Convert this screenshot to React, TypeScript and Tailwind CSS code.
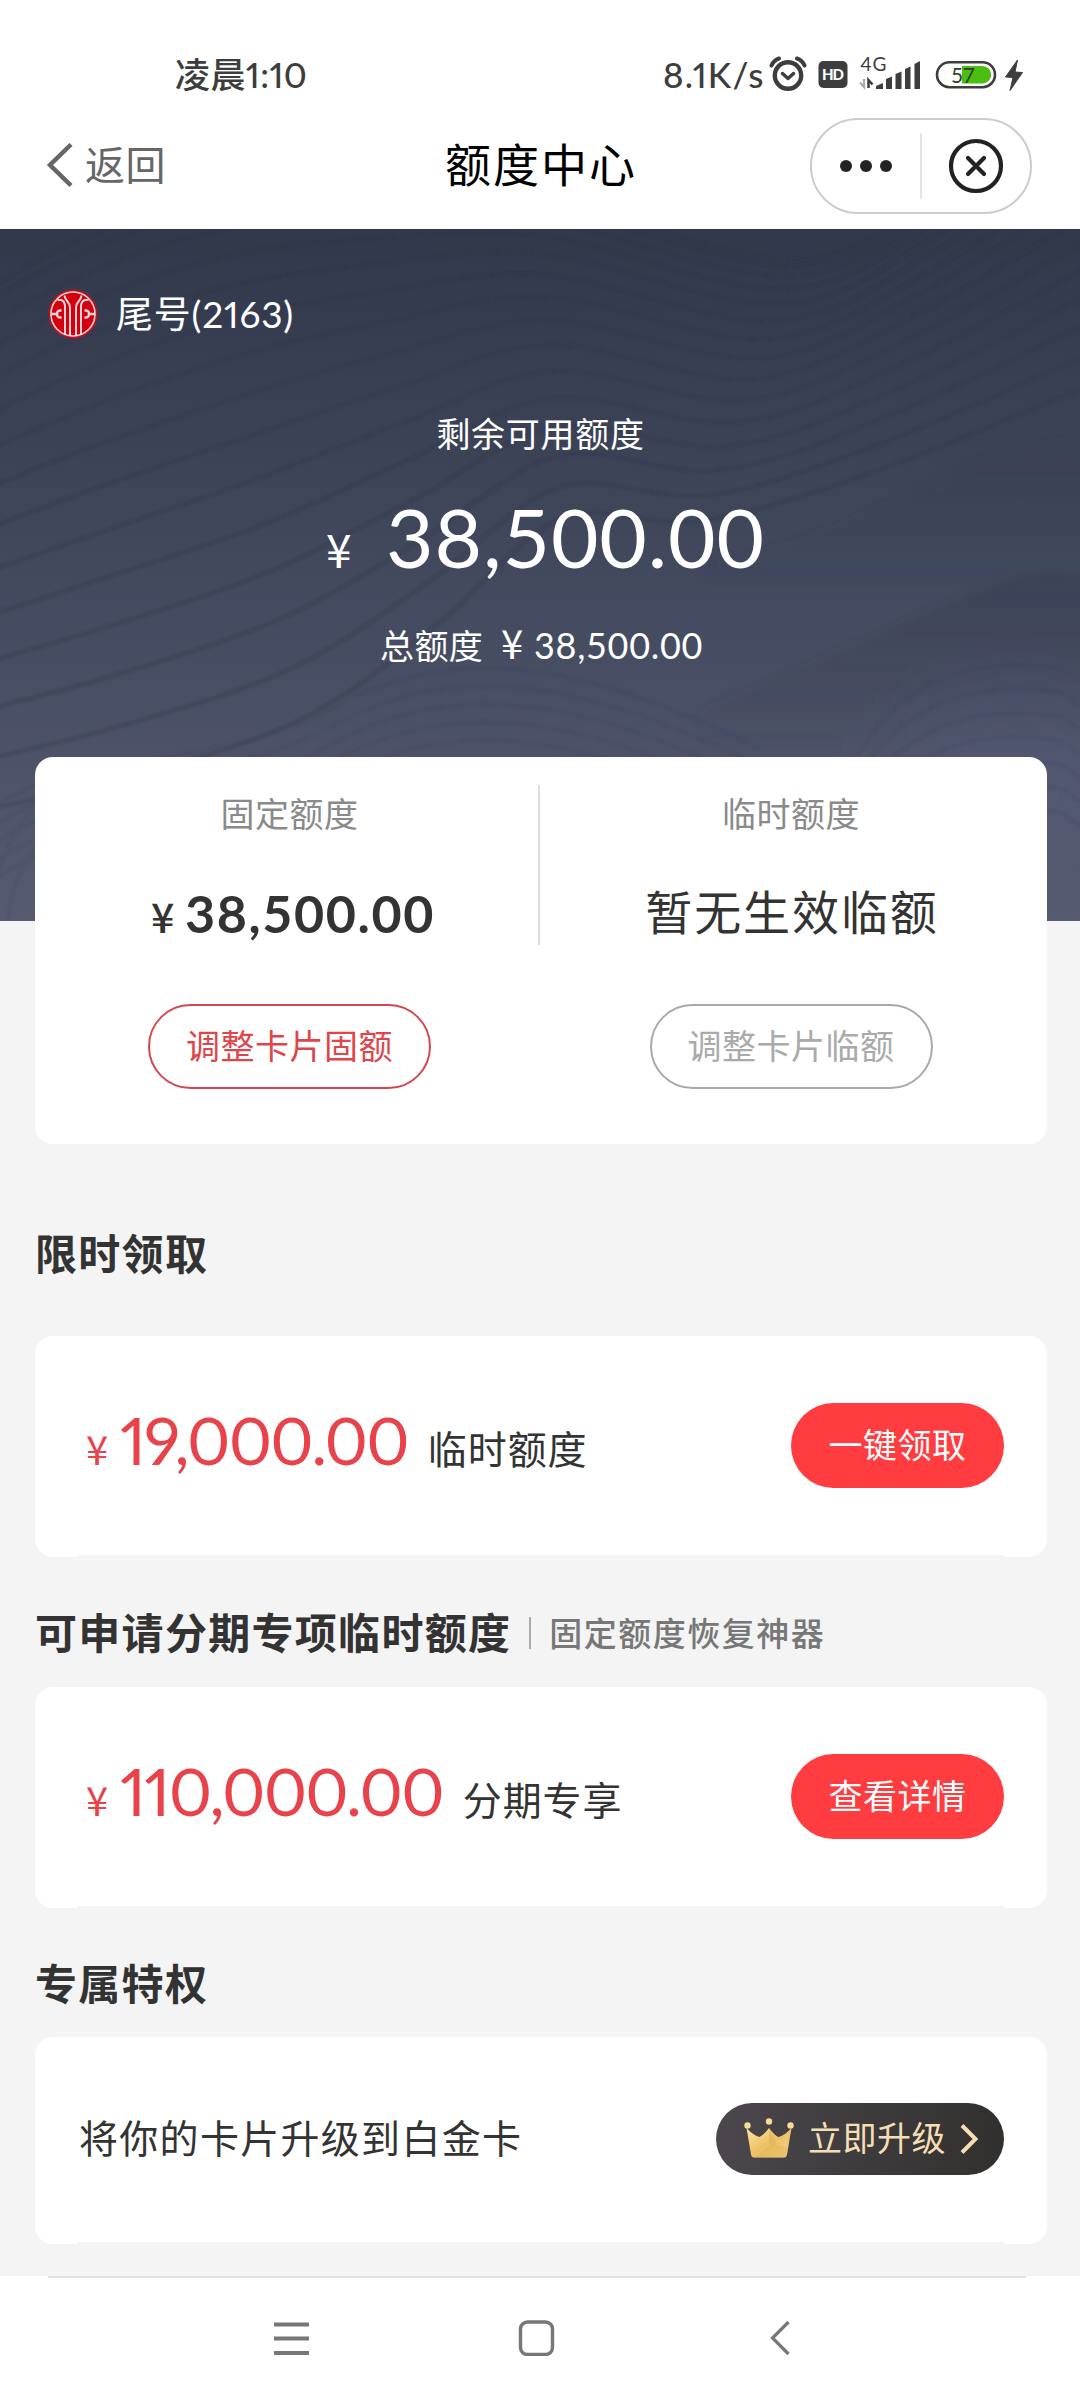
import { ReactNode } from "react";
import clsx from "clsx";

type Point = [number, number];

/* Dos curvas guía: las ondas del fondo se interpolan entre ellas */
const WAVE_TOP: Point[] = [
  [-60, 90],
  [60, 20],
  [200, -30],
  [360, -40],
  [540, -30],
  [800, 30],
  [960, -50],
  [1100, -170],
];
const WAVE_BOTTOM: Point[] = [
  [-60, 540],
  [110, 500],
  [290, 440],
  [430, 352],
  [560, 258],
  [710, 266],
  [880, 215],
  [1100, 120],
];

function smoothPath(points: Point[]): string {
  let d = `M${points[0][0]} ${points[0][1]}`;
  for (let i = 0; i < points.length - 1; i++) {
    const p0 = points[i - 1] ?? points[i];
    const p1 = points[i];
    const p2 = points[i + 1];
    const p3 = points[i + 2] ?? p2;
    const c1 = [p1[0] + (p2[0] - p0[0]) / 6, p1[1] + (p2[1] - p0[1]) / 6];
    const c2 = [p2[0] - (p3[0] - p1[0]) / 6, p2[1] - (p3[1] - p1[1]) / 6];
    d += `C${c1[0].toFixed(1)} ${c1[1].toFixed(1)} ${c2[0].toFixed(1)} ${c2[1].toFixed(1)} ${p2[0]} ${p2[1]}`;
  }
  return d;
}

function wavePath(t: number): string {
  return smoothPath(
    WAVE_TOP.map(([x, y], i): Point => {
      const [bx, by] = WAVE_BOTTOM[i];
      return [Math.round(x + (bx - x) * t), Math.round(y + (by - y) * t)];
    }),
  );
}

const WAVES = Array.from({ length: 15 }, (_, i) => wavePath((i / 13) ** 1.4));

function HeroWaves() {
  return (
    <svg
      className="absolute inset-0 h-full w-full"
      viewBox="0 0 1080 692"
      fill="none"
      aria-hidden
    >
      <defs>
        <linearGradient id="hillA" x1="0" y1="0" x2="0" y2="1">
          <stop offset="0" stopColor="#353b50" stopOpacity=".5" />
          <stop offset=".7" stopColor="#353b50" stopOpacity="0" />
        </linearGradient>
        <radialGradient id="hillB" cx=".6" cy=".6" r=".6">
          <stop offset="0" stopColor="#5c6080" stopOpacity=".4" />
          <stop offset="1" stopColor="#5c6080" stopOpacity="0" />
        </radialGradient>
        <filter id="soft" x="-10%" y="-10%" width="120%" height="120%">
          <feGaussianBlur stdDeviation="4" />
        </filter>
        <filter id="softLine">
          <feGaussianBlur stdDeviation="0.9" />
        </filter>
      </defs>
      <g filter="url(#soft)">
        <path
          d="M700 335C820 310 900 270 970 236C1020 214 1060 212 1100 214V420H700Z"
          fill="url(#hillA)"
          opacity=".7"
        />
        <path
          d="M700 480C790 445 880 405 970 365C1020 340 1060 340 1100 350V600H700Z"
          fill="url(#hillA)"
          opacity=".9"
        />
        <ellipse cx="990" cy="530" rx="160" ry="120" fill="url(#hillB)" />
      </g>
      <g filter="url(#softLine)">
        <g stroke="#2b3047" strokeWidth="3.500" opacity=".28">
          {WAVES.map((d) => (
            <path key={d} d={d} />
          ))}
        </g>
        <g stroke="#3a4058" strokeWidth="3" opacity=".18">
          {[0, 18, 36, 54, 72].map((dy) => (
            <path
              key={dy}
              d={`M0 ${575 + dy}C80 ${520 + dy} 220 ${540 + dy} 330 ${480 + dy}S560 ${420 + dy} 760 ${520 + dy}`}
            />
          ))}
          {[0, 24, 48, 72, 96, 120, 144].map((dy) => (
            <path
              key={dy}
              d={`M850 ${550 + dy}C870 ${480 + dy} 940 ${436 + dy} 1010 ${436 + dy}S1060 ${445 + dy} 1080 ${452 + dy}`}
            />
          ))}
          <path d="M0 640C10 600 30 580 60 560" />
          <path d="M8 692C12 650 26 620 60 600" />
        </g>
      </g>
    </svg>
  );
}

function StatusBar() {
  return (
    <div className="flex h-[110px] items-start pl-[175px] pt-[52px] text-[#3d3d3d]">
      <span className="h-11 w-[488px] text-[35px] font-medium leading-[44px] tracking-[0.4px] proportional-nums">
        凌晨1:10
      </span>
      <span className="w-[106px] text-[35px] font-medium leading-[44px] tracking-[1.2px] proportional-nums">
        8.1K/s
      </span>
      <svg className="h-11 w-[260px]" viewBox="769 52 260 44" fill="none">
        <circle cx="788" cy="75.5" r="13.2" stroke="#3d3d3d" strokeWidth="4.4" />
        <path
          d="M782.500 73.500l5.500 5 5.500-5"
          stroke="#3d3d3d"
          strokeWidth="3.400"
          strokeLinecap="round"
          strokeLinejoin="round"
        />
        <path
          d="M771.500 65.500q2.500-5.500 7.500-7M804.500 65.500q-2.500-5.500-7.500-7"
          stroke="#3d3d3d"
          strokeWidth="4"
          strokeLinecap="round"
        />
        <rect x="818.500" y="61" width="29" height="27" rx="5" fill="#3d3d3d" />
        <text
          x="833"
          y="80"
          textAnchor="middle"
          fontSize="15"
          fontWeight="900"
          fill="#fff"
          fontFamily="Lato"
          textLength="22"
        >
          HD
        </text>
        <text x="860.500" y="71" fontSize="19" fill="#3d3d3d" fontFamily="Lato" textLength="26">
          4G
        </text>
        <path d="M864 79v8l-4-4.500" stroke="#aaa" strokeWidth="2.200" />
        <path d="M868.500 88v-8l4 4.500" stroke="#3d3d3d" strokeWidth="2.500" />
        <path
          d="M876 86l7-3v6h-7zM886 79l6-2.500V89h-6zM895.500 74l6-2.500V89h-6zM905 69l5.500-2.500V89H905zM914.500 64l5.500-3v28h-5.500z"
          fill="#3d3d3d"
        />
        <rect x="937" y="62.200" width="58" height="25" rx="12.500" stroke="#3d3d3d" strokeWidth="2.600" />
        <path d="M962 66h20.500a8.700 8.700 0 010 17.400H962z" fill="#4abf11" />
        <text x="951" y="82.500" fontSize="21" fill="#2f3d2b" fontFamily="Lato" textLength="24">
          57
        </text>
        <path
          d="M1017.500 60l-12 17 7.500.5-3 13 12.500-18-7.500-.5z"
          fill="#3d3d3d"
          stroke="#3d3d3d"
          strokeWidth="1"
        />
      </svg>
    </div>
  );
}

function NavBar() {
  return (
    <div className="grid h-[119px] grid-cols-[1fr_auto_1fr] items-start pl-12 pr-12">
      <div className="-ml-0.5 flex h-[110px] items-center text-[#666]">
        <svg width="28" height="46" viewBox="0 0 28 46" fill="none" stroke="#666" strokeWidth="4.500">
          <path d="M25 2.500L4 23l21 20.500" />
        </svg>
        <span className="ml-[11px] text-[40px] leading-[44px] tracking-[0.6px]">返回</span>
      </div>
      <h1 className="h-[110px] pl-0.5 text-[46px] leading-[110px] tracking-[2px] text-black">额度中心</h1>
      <div className="mt-2 flex h-24 w-[222px] items-center justify-self-end rounded-full border-2 border-[#ccc]">
        <div className="flex flex-1 justify-center gap-2">
          <i className="size-[12px] rounded-full bg-[#222]" />
          <i className="size-[12px] rounded-full bg-[#222]" />
          <i className="size-[12px] rounded-full bg-[#222]" />
        </div>
        <i className="h-[66px] w-[1.500px] bg-[#e4e4e4]" />
        <div className="flex flex-1 justify-center">
          <svg width="56" height="56" viewBox="0 0 56 56" fill="none" stroke="#222" strokeWidth="4.200">
            <circle cx="28" cy="28" r="25" />
            <path d="M20 20l16 16M36 20l-16 16" strokeLinecap="round" />
          </svg>
        </div>
      </div>
    </div>
  );
}

function BankLogo() {
  return (
    <svg width="50" height="50" viewBox="0 0 50 50" fill="none">
      <circle cx="25" cy="25" r="24.500" fill="#c0101e" />
      <circle cx="25" cy="25" r="22" fill="#d5000f" stroke="#f6dcdc" strokeWidth="1.500" />
      <g stroke="#f6dcdc" strokeWidth="1.900">
        <path d="M9.500 11H13Q17 12 17 18V45M40.500 11H37Q33 12 33 18V45" />
        <path d="M16.500 6.500Q17 10 19.500 12.500T22 19V46.500M33.500 6.500Q33 10 30.500 12.500T28 19V46.500" />
      </g>
      <path
        d="M3.500 25H8M13.500 21.500Q9 21 9 25T13.500 28.500M46.500 25H42M36.500 21.500Q41 21 41 25T36.500 28.500"
        stroke="#f6dcdc"
        strokeWidth="2.400"
      />
    </svg>
  );
}

function Yen({ className }: { className?: string }) {
  return (
    <span className={clsx("font-['Noto_Sans_CJK_SC',sans-serif] leading-none", className)}>¥</span>
  );
}

function Hero() {
  return (
    <section className="relative h-[692px] bg-[linear-gradient(#303a4b,#363c50_12%,#3d4458_35%,#464c61_60%,#575b72)] text-white">
      <HeroWaves />
      <div className="relative pt-[60px]">
        <div className="flex h-[50px] items-center pl-12">
          <BankLogo />
          <span className="ml-[18px] text-[37px] leading-[50px] tracking-[0.8px] proportional-nums">
            尾号(2163)
          </span>
        </div>
        <p className="mt-[74px] pl-px text-center text-[34px] leading-[42px] tracking-[0.7px]">
          剩余可用额度
        </p>
        <div className="mt-[40px] flex h-[100px] items-baseline pl-[326px] leading-none">
          <Yen className="w-[60px] text-[46px]" />
          <span className="text-[82px] tracking-[0.9px]">38,500.00</span>
        </div>
        <div className="mt-[27px] flex h-10 items-baseline pl-[380px] leading-none">
          <span className="w-[121px] text-[34px] tracking-[0.4px]">总额度</span>
          <Yen className="w-[33px] text-[40px]" />
          <span className="text-[36px] tracking-[0.7px]">38,500.00</span>
        </div>
      </div>
    </section>
  );
}

function LimitColumn({
  title,
  action,
  disabled,
  className,
  children,
}: {
  title: string;
  action: string;
  disabled?: boolean;
  className?: string;
  children: ReactNode;
}) {
  return (
    <div className={clsx("flex flex-col items-center", className)}>
      <p className="mt-[36px] text-[34px] leading-[42px] tracking-[0.5px] text-[#8a8a8a]">{title}</p>
      <div className="mt-[48px] flex h-[60px] items-baseline text-[#333]">{children}</div>
      <button
        type="button"
        className={clsx(
          "mt-[61px] h-[85px] w-[283px] rounded-full border-2 pb-0.5 text-[34px] leading-none tracking-[0.5px]",
          disabled ? "border-[#a9a9a9] text-[#aaa]" : "border-[#d4474f] text-[#e0454a]",
        )}
      >
        {action}
      </button>
    </div>
  );
}

function Card({ className, children }: { className?: string; children: ReactNode }) {
  return (
    <div className={clsx("flex flex-col rounded-[18px] bg-white", className)}>
      <div className="flex flex-1 items-center">{children}</div>
      {/* Línea inferior del item */}
      <div className="mx-[43px] h-0.5 bg-[#f4f4f4]" />
    </div>
  );
}

function OfferCard({ amount, label, action }: { amount: string; label: string; action: string }) {
  return (
    <Card className="h-[221px]">
      <div className="ml-[51px] flex h-[80px] flex-1 items-baseline leading-none text-[#e8434a]">
        <Yen className="w-[34px] text-[40px]" />
        <span className="text-[66px] leading-[68px] tracking-[-1.8px] proportional-nums">{amount}</span>
        <span className="ml-[20px] -translate-y-px text-[39px] tracking-[0.9px] text-[#333]">
          {label}
        </span>
      </div>
      <button
        type="button"
        className="mr-[43px] h-[85px] w-[213px] rounded-full bg-[#ff3c3f] pb-0.5 text-[34px] leading-none tracking-[0.5px] text-white"
      >
        {action}
      </button>
    </Card>
  );
}

function Crown() {
  return (
    <svg width="50" height="41" viewBox="0 0 50 41">
      <defs>
        <linearGradient id="gold" x1="0" y1="0" x2="1" y2="1">
          <stop offset="0" stopColor="#ffe6a3" />
          <stop offset=".5" stopColor="#edc064" />
          <stop offset="1" stopColor="#f7d88c" />
        </linearGradient>
      </defs>
      <path
        d="M2.500 10Q10 18 15.500 19Q20 17 25 10Q30 17 34.500 19Q40 18 47.500 10L43 36.500Q42.500 39.500 40 39.500H10Q7.500 39.500 7 36.500Z"
        fill="url(#gold)"
      />
      <path d="M25 10L33 27 44 30 43 36.500Q42.500 39.500 40 39.500H10L25 28Z" fill="#dca94d" opacity=".4" />
      <circle cx="3.500" cy="7.500" r="3.200" fill="#f7dc9a" />
      <circle cx="25" cy="3.500" r="3.200" fill="#f7dc9a" />
      <circle cx="46.500" cy="7.500" r="3.200" fill="#f7dc9a" />
    </svg>
  );
}

function SystemNav() {
  return (
    <nav className="flex h-[124px] flex-col bg-white">
      <div className="ml-12 mr-[54px] h-0.5 bg-[#e2e2e2]" />
      <div className="flex pl-[273px] pt-[42px]">
        <svg width="37" height="36" viewBox="0 0 37 36" stroke="#777" strokeWidth="3.800">
          <path d="M1 4.500H36M1 18.500H36M1 33H36" />
        </svg>
        <svg className="ml-[208px]" width="37" height="36" viewBox="0 0 37 36" fill="none">
          <rect x="2.500" y="2" width="32" height="32.500" rx="7" stroke="#777" strokeWidth="3.400" />
        </svg>
        <svg className="ml-[214px]" width="22" height="36" viewBox="0 0 22 36" fill="none">
          <path d="M19.500 2L3.500 18l16 16" stroke="#777" strokeWidth="3.200" />
        </svg>
      </div>
    </nav>
  );
}

export default function App() {
  return (
    <div className="h-[2400px] w-[1080px] overflow-hidden bg-[#f4f4f4] font-['Lato','Noto_Sans_CJK_SC',sans-serif] text-[#333]">
      <header className="bg-white">
        <StatusBar />
        <NavBar />
      </header>
      <Hero />

      <main className="relative -mt-[164px] h-[1519px] pl-[35px] pr-[33px]">
        {/* Límites fijo y temporal */}
        <div className="flex h-[387px] rounded-[18px] bg-white">
          <LimitColumn className="w-[503px] pl-[6px]" title="固定额度" action="调整卡片固额">
            <Yen className="ml-[7px] w-[34px] text-[41px] font-medium" />
            <span className="text-[52px] font-bold leading-[60px] tracking-[1.6px]">38,500.00</span>
          </LimitColumn>
          <div className="mt-7 h-[160px] w-0.5 bg-[#dcdcdc]" />
          <LimitColumn className="flex-1 pr-[5px]" title="临时额度" action="调整卡片临额" disabled>
            <span className="pl-0.5 text-[47px] leading-[58px] tracking-[1.9px]">暂无生效临额</span>
          </LimitColumn>
        </div>

        <h2 className="mt-[85px] text-[42px] font-bold leading-[50px] tracking-[1.300px]">限时领取</h2>
        <div className="mt-[57px]">
          <OfferCard amount="19,000.00" label="临时额度" action="一键领取" />
        </div>

        <div className="mt-[51px] flex h-[50px] items-center">
          <h2 className="text-[42px] font-bold leading-[50px] tracking-[1.300px]">可申请分期专项临时额度</h2>
          <i className="ml-[18px] mr-[18px] h-8 w-0.5 bg-[#aaa]" />
          <span className="text-[33px] font-medium leading-[50px] tracking-[1.500px] text-[#777]">
            固定额度恢复神器
          </span>
        </div>
        <div className="mt-[29px]">
          <OfferCard amount="110,000.00" label="分期专享" action="查看详情" />
        </div>

        <h2 className="mt-[51px] text-[42px] font-bold leading-[50px] tracking-[1.300px]">专属特权</h2>
        <Card className="mt-[28px] h-[207px]">
          <span className="-mt-[3px] ml-11 flex-1 text-[39px] leading-[50px] tracking-[1.300px]">
            将你的卡片升级到白金卡
          </span>
          <button
            type="button"
            className="-mt-0.5 mr-[43px] flex h-[72px] w-[288px] items-center rounded-full bg-linear-to-r from-[#4b474d] to-[#32302e] pl-[28px]"
          >
            <Crown />
            <span className="ml-[14px] pb-0.5 text-[34px] leading-none tracking-[0.500px] text-[#f6deb4]">
              立即升级
            </span>
            <svg className="ml-[13px]" width="20" height="32" viewBox="0 0 20 32" fill="none">
              <path d="M3 2.500L16.500 16 3 29.500" stroke="#f6deb4" strokeWidth="4" />
            </svg>
          </button>
        </Card>
      </main>
      <SystemNav />
    </div>
  );
}
